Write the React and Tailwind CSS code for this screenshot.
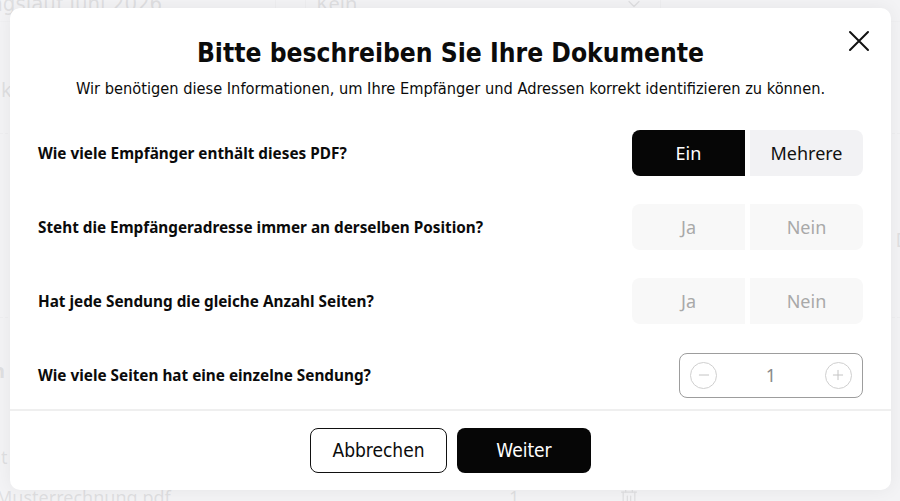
import { Minus, Plus, Trash2, ChevronDown } from "lucide-react";

const questions = [
  { id: "recipients", label: "Wie viele Empfänger enthält dieses PDF?", type: "toggle", options: ["Ein", "Mehrere"], value: "Ein" },
  { id: "position", label: "Steht die Empfängeradresse immer an derselben Position?", type: "toggle", options: ["Ja", "Nein"], disabled: true },
  { id: "pages", label: "Hat jede Sendung die gleiche Anzahl Seiten?", type: "toggle", options: ["Ja", "Nein"], disabled: true },
  { id: "count", label: "Wie viele Seiten hat eine einzelne Sendung?", type: "stepper", value: 1 },
];

function Toggle({ options, value, disabled }) {
  return (
    <div className="flex gap-[5px]">
      {options.map((opt, i) => {
        const active = opt === value;
        const side = i === 0 ? "rounded-l-lg" : "rounded-r-lg";
        let tone = "bg-[#f2f2f4] text-[#111]";
        if (active) tone = "bg-[#060606] text-white";
        if (disabled) tone = "bg-[#f8f8f8] text-[#a9a9a9]";
        return (
          <button
            key={opt}
            className={`w-[113px] h-[46px] flex items-center justify-center text-[18px] ${side} ${tone}`}
          >
            {opt}
          </button>
        );
      })}
    </div>
  );
}

function Stepper({ value }) {
  return (
    <div className="w-[184px] h-[45px] border border-[#9d9d9d] rounded-lg flex items-center justify-between px-[10px]">
      <span className="w-[27px] h-[27px] rounded-full border-[1.5px] border-[#cfcfcf] flex items-center justify-center text-[#c4c4c4]">
        <Minus size={16} strokeWidth={1.5} />
      </span>
      <span className="text-[18px] text-[#8a8a8a]">{value}</span>
      <span className="w-[27px] h-[27px] rounded-full border-[1.5px] border-[#cfcfcf] flex items-center justify-center text-[#c4c4c4]">
        <Plus size={16} strokeWidth={1.5} />
      </span>
    </div>
  );
}

// Page behind the dialog, dimmed by the overlay
function BackgroundPage() {
  return (
    <div className="w-[900px] h-[501px] overflow-hidden bg-white text-[#333] font-['Noto_Sans',sans-serif]">
      <div className="flex items-center h-[36px] mt-[-14px] border-b border-[#ddd]">
        <div className="ml-[-66px] w-[343px] text-[22px] font-['DejaVu_Sans_Condensed',sans-serif]">Zahlungslauf Juni 2026</div>
        <div className="w-px h-full bg-[#ccc]" />
        <div className="ml-[29px] w-px h-full bg-[#ccc]" />
        <div className="w-[356px] flex items-center justify-between pl-[10px] pr-[16px] text-[20px]">
          <span>Kein</span>
          <ChevronDown size={20} strokeWidth={1.5} />
        </div>
        <div className="w-px h-full bg-[#ccc]" />
        <div className="ml-[48px] text-[22px] font-['DejaVu_Sans_Condensed',sans-serif]">Vorlagen verwalten</div>
      </div>
      <div className="h-[111px] pt-[54px] text-[20px] leading-[28px] ml-[1px]">k</div>
      <div className="h-[184px] border-t border-dashed border-[#ccc] flex justify-end pt-[92px]">
        <span className="mr-[-10px] text-[20px] leading-[28px]">D</span>
      </div>
      <div className="h-[168px] border-t border-dashed border-[#ccc] flex flex-col">
        <span className="ml-[-8px] mt-[39px] text-[20px] leading-[28px] font-bold">n</span>
        <span className="ml-[-10px] mt-[59px] text-[18px] leading-[26px]">nt</span>
      </div>
      <div className="flex items-center h-[24px] text-[18px]">
        <span className="w-[513px] ml-[-4px]">Musterrechnung.pdf</span>
        <span className="w-[110px]">1</span>
        <Trash2 size={20} strokeWidth={1.5} />
      </div>
    </div>
  );
}

export default function App() {
  return (
    <div className="relative w-[900px] h-[501px] overflow-hidden">
      <BackgroundPage />

      {/* overlay */}
      <div className="absolute inset-0 bg-[#f2f2f4]/90" />

      <div className="absolute left-[10px] top-[8px] w-[881px] h-[482px] bg-white rounded-[10px] shadow-[0_0_18px_rgba(0,0,0,0.06)] flex flex-col text-[#0b0b0b]">
        <button className="absolute right-[21px] top-[22px] text-[#111]">
          <svg width="22" height="22" viewBox="0 0 22 22" fill="none" stroke="currentColor" strokeWidth="2" strokeLinecap="round">
            <path d="M2 2 L20 20 M20 2 L2 20" />
          </svg>
        </button>

        <div className="pt-[29px] flex flex-col items-center font-['DejaVu_Sans_Condensed',sans-serif]">
          <h1 className="text-[26.2px] leading-[32px] font-bold">Bitte beschreiben Sie Ihre Dokumente</h1>
          <p className="mt-[8px] text-[16.25px] leading-[24px]">
            Wir benötigen diese Informationen, um Ihre Empfänger und Adressen korrekt identifizieren zu können.
          </p>
        </div>

        <div className="mt-[29px] px-[28px] pb-[11px] flex flex-col gap-[28px] font-['Noto_Sans',sans-serif]">
          {questions.map((q) => (
            <div key={q.id} className="h-[46px] flex items-center justify-between">
              <span className="text-[15.3px] font-bold">{q.label}</span>
              {q.type === "toggle" ? (
                <Toggle options={q.options} value={q.value} disabled={q.disabled} />
              ) : (
                <Stepper value={q.value} />
              )}
            </div>
          ))}
        </div>

        <div className="border-t-2 border-[#efefef] flex justify-center gap-[10px] pt-[17px] font-['DejaVu_Sans_Condensed',sans-serif]">
          <button className="w-[137px] h-[45px] border border-[#111] rounded-lg text-[19px]">Abbrechen</button>
          <button className="w-[134px] h-[45px] bg-[#060606] text-white rounded-lg text-[19px]">Weiter</button>
        </div>
      </div>
    </div>
  );
}
